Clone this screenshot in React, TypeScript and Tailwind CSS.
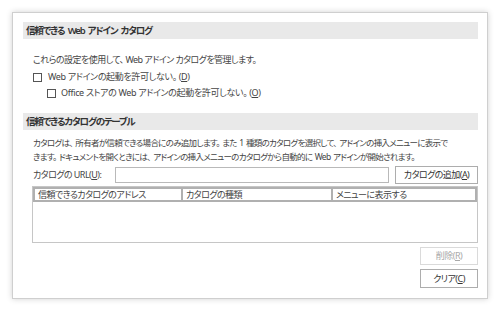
import React from 'react';

const font = "font-['Noto_Sans','Noto_Sans_CJK_JP',sans-serif] [font-feature-settings:'palt']";

function Checkbox() {
  return <span className="inline-block w-[9px] h-[9px] border border-[#555] bg-white shrink-0" />;
}

function SectionHeader({ title }: { title: string }) {
  return (
    <div className="h-[17px] bg-[#e9e9e9] flex items-center pl-[3px] text-[9.5px] font-semibold text-[#333] tracking-[-1.2px] [word-spacing:2px]">
      {title}
    </div>
  );
}

function Btn({ children, disabled }: { children: React.ReactNode; disabled?: boolean }) {
  return (
    <div
      className={
        'w-[58px] border flex items-center justify-center ' +
        (disabled ? 'h-[18px] border-[#dadada] text-[#a8a8a8]' : 'h-[19px] border-[#adadad] text-[#333]')
      }
    >
      {children}
    </div>
  );
}

export default function App() {
  return (
    <div className={`w-[500px] h-[312px] bg-white pt-[12px] pl-[12px] ${font}`}>
      <div className="w-[476px] h-[287px] border border-[#cfcfcf] bg-white shadow-[0_0_6px_rgba(0,0,0,0.18)] pl-[10px] pr-[9px] pt-[9px] text-[#444] text-[9px] leading-[14px] tracking-[-0.55px]">
        <SectionHeader title="信頼できる Web アドイン カタログ" />

        <div className="mt-[13px] pl-[10px] h-[16px] flex items-center">
          これらの設定を使用して、 Web アドイン カタログを管理します。
        </div>
        <div className="mt-[1px] pl-[10px] h-[16px] flex items-center gap-[6px] tracking-[-0.35px]">
          <Checkbox />
          <span>
            Web アドインの起動を許可しない。 (<span className="underline">D</span>)
          </span>
        </div>
        <div className="pl-[24px] h-[16px] flex items-center gap-[5px] tracking-[-0.35px]">
          <Checkbox />
          <span>
            Office ストアの Web アドインの起動を許可しない。 (<span className="underline">O</span>)
          </span>
        </div>

        <div className="mt-[12px]">
          <SectionHeader title="信頼できるカタログのテーブル" />
        </div>

        <div className="mt-[6px] pl-[10px] whitespace-nowrap text-[8.5px] tracking-[-0.7px] [word-spacing:1px]">
          <div>カタログは、 所有者が信頼できる場合にのみ追加します。 また 1 種類のカタログを選択して、 アドインの挿入メニューに表示で</div>
          <div>きます。 ドキュメントを開くときには、 アドインの挿入メニューのカタログから自動的に Web アドインが開始されます。</div>
        </div>

        <div className="mt-[2px] pl-[10px] flex items-center h-[18px]">
          <span className="w-[82px]">
            カタログの URL(<span className="underline">U</span>):
          </span>
          <div className="w-[274px] h-[16px] border border-[#b9b9b9] bg-white" />
          <div className="ml-[6px] h-[18px] w-[83px] border border-[#adadad] flex items-center justify-center text-[#333]">
            カタログの追加(<span className="underline">A</span>)
          </div>
        </div>

        <div className="mt-[2px] ml-[9px] w-[446px] h-[57px] border border-[#c6c6c6] flex flex-col">
          <div className="flex h-[15px] text-[#444]">
            <div className="w-[150px] border-2 border-[#b0b0b0] flex items-center pl-[3px]">信頼できるカタログのアドレス</div>
            <div className="w-[150px] border-2 border-l-0 border-[#b0b0b0] flex items-center pl-[3px]">カタログの種類</div>
            <div className="flex-1 border-2 border-l-0 border-[#b0b0b0] flex items-center pl-[3px]">メニューに表示する</div>
          </div>
        </div>

        <div className="mt-[4px] flex flex-col items-end gap-[4px]">
          <Btn disabled>
            削除(<span className="underline">R</span>)
          </Btn>
          <Btn>
            クリア(<span className="underline">C</span>)
          </Btn>
        </div>
      </div>
    </div>
  );
}
